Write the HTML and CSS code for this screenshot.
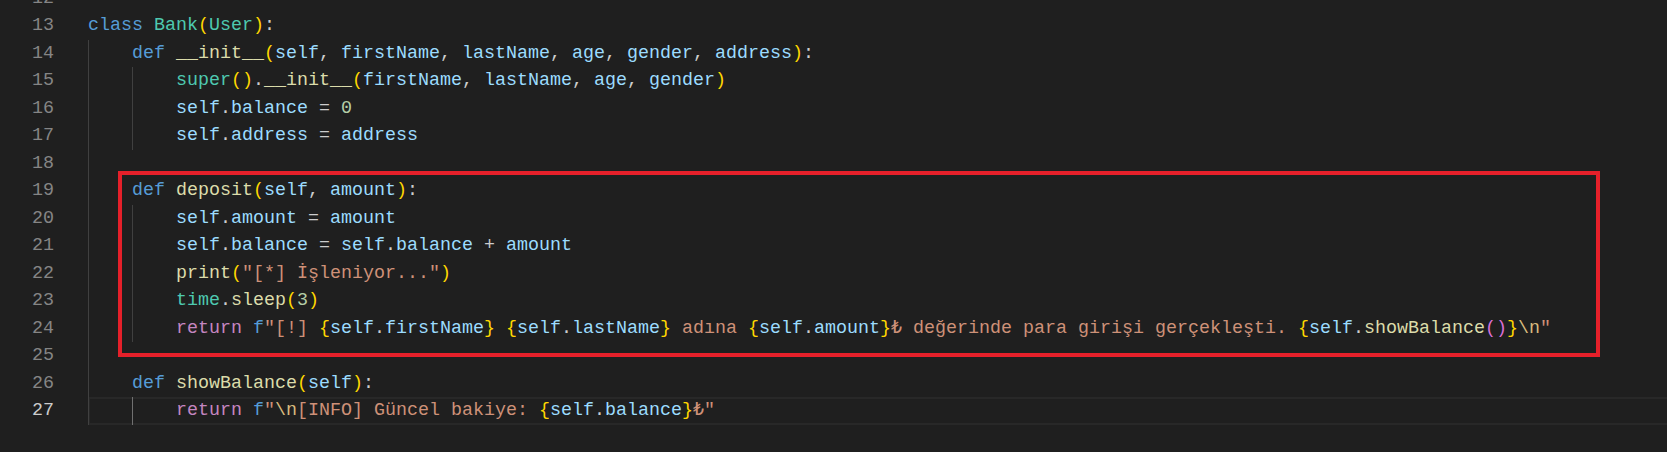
FILE: index.html
```html
<!DOCTYPE html>
<html lang="tr">
<head>
<meta charset="utf-8">
<title>bank.py</title>
<link rel="stylesheet" href="styles.css">
</head>
<body>
<div class="editor">
  <div class="line"><span class="ln">12</span><span class="code"></span></div>
  <div class="line"><span class="ln">13</span><span class="code"><span class="k">class</span> <span class="c">Bank</span><span class="b1">(</span><span class="c">User</span><span class="b1">)</span>:</span></div>
  <div class="line"><span class="ln">14</span><span class="code"><span class="ig"></span><span class="k">def</span> <span class="f">__init__</span><span class="b1">(</span><span class="v">self</span>, <span class="v">firstName</span>, <span class="v">lastName</span>, <span class="v">age</span>, <span class="v">gender</span>, <span class="v">address</span><span class="b1">)</span>:</span></div>
  <div class="line"><span class="ln">15</span><span class="code"><span class="ig"></span><span class="ig"></span><span class="c">super</span><span class="b1">()</span>.<span class="f">__init__</span><span class="b1">(</span><span class="v">firstName</span>, <span class="v">lastName</span>, <span class="v">age</span>, <span class="v">gender</span><span class="b1">)</span></span></div>
  <div class="line"><span class="ln">16</span><span class="code"><span class="ig"></span><span class="ig"></span><span class="v">self</span>.<span class="v">balance</span> = <span class="n">0</span></span></div>
  <div class="line"><span class="ln">17</span><span class="code"><span class="ig"></span><span class="ig"></span><span class="v">self</span>.<span class="v">address</span> = <span class="v">address</span></span></div>
  <div class="line"><span class="ln">18</span><span class="code"><span class="ig"></span></span></div>
  <div class="line"><span class="ln">19</span><span class="code"><span class="ig"></span><span class="k">def</span> <span class="f">deposit</span><span class="b1">(</span><span class="v">self</span>, <span class="v">amount</span><span class="b1">)</span>:</span></div>
  <div class="line"><span class="ln">20</span><span class="code"><span class="ig"></span><span class="ig"></span><span class="v">self</span>.<span class="v">amount</span> = <span class="v">amount</span></span></div>
  <div class="line"><span class="ln">21</span><span class="code"><span class="ig"></span><span class="ig"></span><span class="v">self</span>.<span class="v">balance</span> = <span class="v">self</span>.<span class="v">balance</span> + <span class="v">amount</span></span></div>
  <div class="line"><span class="ln">22</span><span class="code"><span class="ig"></span><span class="ig"></span><span class="f">print</span><span class="b1">(</span><span class="s">"[*] İşleniyor..."</span><span class="b1">)</span></span></div>
  <div class="line"><span class="ln">23</span><span class="code"><span class="ig"></span><span class="ig"></span><span class="c">time</span>.<span class="f">sleep</span><span class="b1">(</span><span class="n">3</span><span class="b1">)</span></span></div>
  <div class="line"><span class="ln">24</span><span class="code"><span class="ig"></span><span class="ig"></span><span class="r">return</span> <span class="k">f</span><span class="s">"[!] </span><span class="b1">{</span><span class="v">self</span>.<span class="v">firstName</span><span class="b1">}</span><span class="s"> </span><span class="b1">{</span><span class="v">self</span>.<span class="v">lastName</span><span class="b1">}</span><span class="s"> adına </span><span class="b1">{</span><span class="v">self</span>.<span class="v">amount</span><span class="b1">}</span><span class="s">₺ değerinde para girişi gerçekleşti. </span><span class="b1">{</span><span class="v">self</span>.<span class="f">showBalance</span><span class="b2">()</span><span class="b1">}</span><span class="e">\n</span><span class="s">"</span></span></div>
  <div class="line"><span class="ln">25</span><span class="code"><span class="ig"></span></span></div>
  <div class="line"><span class="ln">26</span><span class="code"><span class="ig"></span><span class="k">def</span> <span class="f">showBalance</span><span class="b1">(</span><span class="v">self</span><span class="b1">)</span>:</span></div>
  <div class="line"><span class="ln cur">27</span><span class="code cur"><span class="ig"></span><span class="ig on"></span><span class="r">return</span> <span class="k">f</span><span class="s">"</span><span class="e">\n</span><span class="s">[INFO] Güncel bakiye: </span><span class="b1">{</span><span class="v">self</span>.<span class="v">balance</span><span class="b1">}</span><span class="s">₺"</span></span></div>
  <div class="mark"></div>
</div>
</body>
</html>
```

FILE: styles.css
```css
html, body {
  margin: 0;
  padding: 0;
  height: 100%;
  overflow: hidden;
  background: #1f1f1f;
}

.editor {
  position: relative;
  margin-top: -15.5px;
  font-family: "Liberation Mono", "DejaVu Sans Mono", monospace;
  font-size: 18.333px;
  line-height: 27.5px;
  color: #cccccc;
}

.line {
  display: flex;
  height: 27.5px;
}

.ln {
  flex: none;
  width: 54px;
  margin-right: 34px;
  text-align: right;
  color: #858585;
}

.ln.cur {
  color: #cccccc;
}

.code {
  flex: 1;
  white-space: pre;
}

.code.cur {
  box-shadow: inset 0 2px #282828, inset 0 -2px #282828, inset 2px 0 #282828;
}

.ig {
  display: inline-block;
  width: 44px;
  height: 27.5px;
  vertical-align: top;
  box-shadow: inset 1px 0 #404040;
}

.ig.on {
  box-shadow: inset 1px 0 #707070;
}

.k { color: #569cd6; }
.c { color: #4ec9b0; }
.f { color: #dcdcaa; }
.v { color: #9cdcfe; }
.n { color: #b5cea8; }
.s { color: #ce9178; }
.r { color: #c586c0; }
.e { color: #d7ba7d; }
.b1 { color: #ffd700; }
.b2 { color: #da70d6; }

.mark {
  position: absolute;
  left: 118px;
  top: 186.5px;
  width: 1482px;
  height: 186px;
  border: 4px solid #e5202a;
  box-sizing: border-box;
}
```
